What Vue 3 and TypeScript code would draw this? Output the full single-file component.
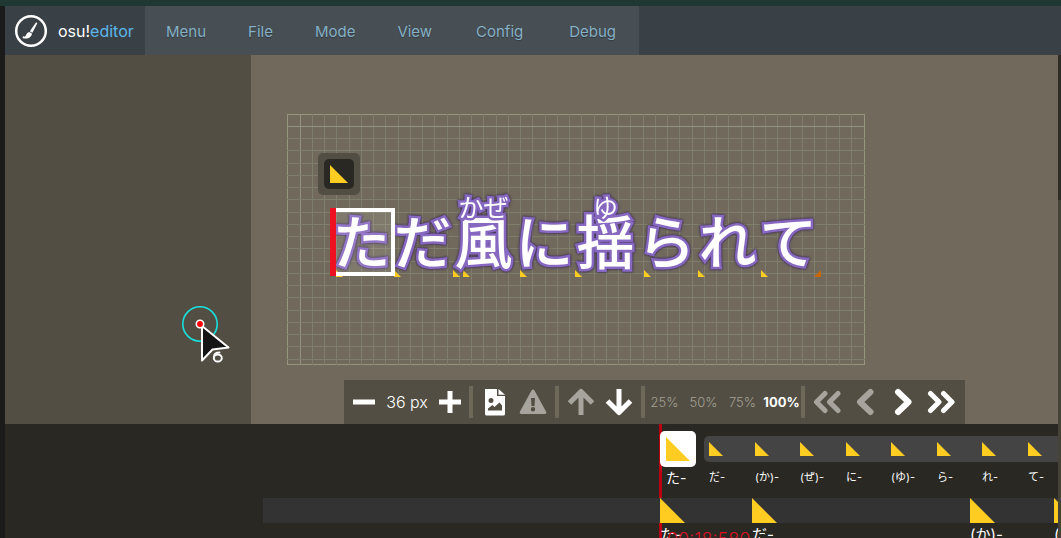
<script setup lang="ts">
interface Mark { left: number; label: string }

const menus: string[] = ['Menu', 'File', 'Mode', 'View', 'Config', 'Debug']

const cell = 12.25
const columns: number[] = Array.from({ length: 46 }, (_, i) => Math.ceil((i + 1) * cell))
const rows: number[] = Array.from({ length: 20 }, (_, i) => Math.floor((i + 1) * cell))

const glyphs: { text: string; ruby?: string }[] = [
  { text: 'た' }, { text: 'だ' }, { text: '風', ruby: 'かぜ' }, { text: 'に' },
  { text: '揺', ruby: 'ゆ' }, { text: 'ら' }, { text: 'れ' }, { text: 'て' },
]
const ticks: number[] = [49, 107, 166, 176, 233, 288, 357, 411, 474]

const zooms: string[] = ['25%', '50%', '75%', '100%']

const upcoming: Mark[] = [
  { left: 709, label: 'だ-' }, { left: 755, label: '(か)-' }, { left: 800, label: '(ぜ)-' },
  { left: 846, label: 'に-' }, { left: 891, label: '(ゆ)-' }, { left: 937, label: 'ら-' },
  { left: 982, label: 'れ-' }, { left: 1028, label: 'て-' },
]
const track: Mark[] = [
  { left: 660, label: 'た-' }, { left: 752, label: 'だ-' },
  { left: 970, label: '(か)-' }, { left: 1054, label: '(ぜ)-' },
]
const at = (left: number) => ({ left: `${left - 5}px` })
</script>

<template>
  <div class="frame">
    <header class="topbar">
      <a class="brand" href="#">
        <svg width="34" height="34" viewBox="0 0 34 34" aria-hidden="true">
          <circle cx="17" cy="17" r="14.8" fill="none" stroke="#fff" stroke-width="2.5" />
          <path d="M22 8.600Q23 8 23.300 9.200L18.400 18.800L15.800 17.300Z" fill="#fff" />
          <path d="M15.300 17.900L18 19.500C17.600 23 14.500 25.700 8.700 24.200Q8.500 23 9.100 22.300Q11.300 23.600 12 21Q12.800 18.300 15.300 17.900Z" fill="#fff" />
        </svg>
        <span class="name">osu!<b>editor</b></span>
      </a>
      <nav class="menu">
        <button v-for="m in menus" :key="m" type="button">{{ m }}</button>
      </nav>
    </header>

    <div class="body">
      <div class="content">
        <div class="work">
          <aside class="side">
            <svg class="pointer" width="50" height="60" viewBox="0 0 50 60" aria-hidden="true">
              <circle cx="19" cy="20" r="17.200" fill="none" stroke="#18e0dc" stroke-width="1.600" />
              <path d="M21 22L47.500 43.500L31.500 45.500L21 56.500Z" fill="#151515" stroke="#fff" stroke-width="2" stroke-linejoin="round" />
              <circle cx="19" cy="20" r="3.700" fill="#f00" stroke="#fff" stroke-width="1.600" />
              <path d="M33 53Q32.500 48.500 38.500 48.500" fill="none" stroke="#fff" stroke-width="1.800" stroke-linecap="round" />
              <ellipse cx="36.800" cy="54" rx="4" ry="3.500" fill="none" stroke="#fff" stroke-width="1.900" />
            </svg>
          </aside>

          <main class="stage">
            <div class="sheet">
              <svg class="grid" width="578" height="251" viewBox="0 0 578 251" aria-hidden="true">
                <rect v-for="(x, i) in columns" :key="'c' + x" :x="x" y="0" width="1" height="251" :class="{ strong: i === 0 }" />
                <rect v-for="(y, i) in rows" :key="'r' + y" x="0" :y="y" width="578" height="1" :class="{ strong: i === 0 }" />
              </svg>
              <button class="node" type="button" aria-label="Timing node">
                <span><i class="tri"></i></span>
              </button>
              <i v-for="t in ticks" :key="t" class="tick tri" :style="{ left: `${t}px` }"></i>
              <i class="tick end"></i>
              <div class="lyric">
                <span v-for="g in glyphs" :key="g.text" class="glyph">{{ g.text }}<small v-if="g.ruby">{{ g.ruby }}</small></span>
              </div>
              <div class="selection"></div>
            </div>

            <div class="tools">
              <button class="tool" type="button" aria-label="Smaller">
                <svg width="28" height="28" viewBox="0 0 28 28"><path d="M3 14H25" class="bar" /></svg>
              </button>
              <span class="size">36 px</span>
              <button class="tool" type="button" aria-label="Larger">
                <svg width="28" height="28" viewBox="0 0 28 28"><path d="M3 14H25M14 3V25" class="bar" /></svg>
              </button>
              <i class="sep"></i>
              <div class="group">
                <button class="tool" type="button" aria-label="Image">
                  <svg width="28" height="28" viewBox="0 0 28 28">
                    <path fill="#fff" fill-rule="evenodd" d="M4 1H16V8H24V26Q24 27.500 22.500 27.500H5.500Q4 27.500 4 26ZM10 10A2.500 2.500 0 1 0 10 15A2.500 2.500 0 1 0 10 10ZM7 22.500H21V17.500L18.500 14.500L13.500 19L11.500 17L7 20.500Z" />
                    <path fill="#fff" d="M17.500 1L24 6.700H17.500Z" />
                  </svg>
                </button>
                <button class="tool dim" type="button" aria-label="Warnings">
                  <svg width="28" height="28" viewBox="0 0 28 28">
                    <path fill="currentColor" fill-rule="evenodd" d="M12.500 2.500Q14 .500 15.500 2.500L27 23.500Q28 26 25.500 26H2.500Q0 26 1 23.500ZM12 10L12.500 18H15.500L16 10ZM14 19A2.200 2.200 0 1 0 14 23.400A2.200 2.200 0 1 0 14 19Z" />
                  </svg>
                </button>
              </div>
              <i class="sep"></i>
              <div class="group">
                <button class="tool dim" type="button" aria-label="Move up">
                  <svg width="28" height="28" viewBox="0 0 28 28"><path d="M14 27V4M2.500 15L14 3.500L25.500 15" class="arrow" /></svg>
                </button>
                <button class="tool" type="button" aria-label="Move down">
                  <svg width="28" height="28" viewBox="0 0 28 28"><path d="M14 1V24M2.500 13L14 24.500L25.500 13" class="arrow" /></svg>
                </button>
              </div>
              <i class="sep"></i>
              <div class="zooms">
                <button v-for="z in zooms" :key="z" type="button" :class="{ on: z === '100%' }">{{ z }}</button>
              </div>
              <i class="sep"></i>
              <div class="group">
                <button class="tool dim" type="button" aria-label="First">
                  <svg width="28" height="28" viewBox="0 0 28 28"><path d="M12 5.500L3.500 14L12 22.500M25 5.500L16.500 14L25 22.500" class="chev" /></svg>
                </button>
                <button class="tool dim" type="button" aria-label="Previous">
                  <svg width="28" height="28" viewBox="0 0 28 28"><path d="M19.500 4L9 14L19.500 24" class="chev wide" /></svg>
                </button>
                <button class="tool" type="button" aria-label="Next">
                  <svg width="28" height="28" viewBox="0 0 28 28"><path d="M9 4L19.500 14L9 24" class="chev wide" /></svg>
                </button>
                <button class="tool" type="button" aria-label="Last">
                  <svg width="28" height="28" viewBox="0 0 28 28"><path d="M3.500 5.500L12 14L3.500 22.500M16.500 5.500L25 14L16.500 22.500" class="chev" /></svg>
                </button>
              </div>
            </div>
          </main>
        </div>

        <section class="timeline">
          <i class="playhead"></i>
          <div class="strip"></div>
          <div class="lane"></div>
          <div class="current"><i class="tri"></i></div>
          <span class="mark now">た-</span>
          <div v-for="m in upcoming" :key="m.label" class="mark" :style="at(m.left)">
            <i class="tri"></i><span>{{ m.label }}</span>
          </div>
          <div v-for="m in track" :key="m.left" class="mark big" :style="at(m.left)">
            <i class="tri"></i><span>{{ m.label }}</span>
          </div>
          <span class="time">00:18:580</span>
        </section>
      </div>
      <div class="scroll"><i></i></div>
    </div>
  </div>
</template>

<style>
body { margin: 0; overflow: hidden; background: #1b1b1b; }
</style>

<style scoped>
.frame {
  height: 100vh;
  box-sizing: border-box;
  display: flex;
  flex-direction: column;
  padding: 6px 0 0 5px;
  background: linear-gradient(#1f3833 6px, #1b1b1b 6px);
  font-family: Inter, "Noto Sans CJK JP", sans-serif;
}
button { border: 0; padding: 0; margin: 0; background: none; font: inherit; color: inherit; }
.tri { display: block; background: #ffcc22; clip-path: polygon(0 0, 100% 100%, 0 100%); }

.topbar { display: flex; flex: none; height: 49px; background: #394046; }
.brand { width: 140px; box-sizing: border-box; padding-left: 9px; display: flex; align-items: center; gap: 10px; color: #fff; text-decoration: none; font-size: 16px; }
.brand b { font-weight: 400; color: #5cb8ec; }
.menu { display: flex; background: #474f55; }
.menu button { padding: 2px 21px 0; font-size: 15px; color: #86b0c5; text-shadow: 0 1px 1px #0005; }
.menu button:nth-last-child(-n + 2) { min-width: 93px; }

.body { flex: 1; min-height: 0; display: flex; }
.content { position: relative; flex: 1; min-width: 0; display: flex; flex-direction: column; overflow: hidden; }
.scroll { width: 3px; background: #454238; }
.scroll i { display: block; height: 30%; background: #2f2c26; }

.work { display: flex; flex: none; height: 369px; }
.side { position: relative; width: 246px; flex: none; background: #524e43; }
.pointer { position: absolute; left: 176px; top: 249px; }
.stage { flex: 1; display: flex; flex-direction: column; justify-content: space-between; align-items: center; background: #716a5c; }
.sheet { position: relative; align-self: flex-start; box-sizing: border-box; width: 578px; height: 251px; margin: 59px 0 0 36px; outline: 1px solid #96967f; outline-offset: -1px; }
.grid { position: absolute; left: 0; top: 0; }
.grid rect { fill: #7f7e6d; }
.grid .strong { fill: #929280; }
.node { position: absolute; left: 31px; top: 39px; padding: 6px; border-radius: 5px; background: #524e43; }
.node span { width: 30px; height: 30px; border-radius: 5px; display: grid; place-items: center; background: #292823; }
.node .tri { width: 18px; height: 18px; }
.selection { position: absolute; left: 43px; top: 94px; width: 65px; height: 68px; box-sizing: border-box; border: 4px solid #fff; border-left: 6px solid #fff; background: #ffffff1c; }
.selection::before { content: ""; position: absolute; left: -6px; top: -4px; bottom: -4px; width: 6px; background: #ee1122; }
.tick { position: absolute; top: 156px; width: 7px; height: 7px; }
.end { left: 527px; background: #cc6600; clip-path: polygon(100% 0, 100% 100%, 0 100%); }
.lyric { position: absolute; left: 44px; top: 95px; display: flex; font-family: "Noto Sans CJK JP", sans-serif; font-size: 58px; font-weight: 500; line-height: 61px; color: #fff; -webkit-text-stroke: 5px #8768c0; paint-order: stroke fill; filter: drop-shadow(0 0 1px #3a2a55) drop-shadow(0 0 1px #3a2a5588); }
.glyph { position: relative; width: 61px; text-align: center; }
.glyph small { position: absolute; left: 0; right: 0; top: -15px; font-size: 25px; line-height: 25px; font-weight: 400; white-space: nowrap; }

.tools { display: flex; align-items: center; height: 44px; padding: 0 2px 0 1px; background: #524e43; color: #fff; }
.tool { width: 38px; height: 38px; display: grid; place-items: center; }
.dim { color: #a6a49d; }
.size { width: 48px; text-align: center; font-size: 16px; font-weight: 300; }
.sep { width: 4px; height: 32px; background: #6d6858; }
.group { display: flex; padding: 0 3px; }
.bar { stroke: #fff; stroke-width: 5; fill: none; }
.arrow { stroke: currentColor; stroke-width: 5; stroke-linejoin: round; fill: none; }
.chev { stroke: currentColor; stroke-width: 5; stroke-linecap: round; stroke-linejoin: round; fill: none; }
.wide { stroke-width: 6; }
.zooms { display: flex; }
.zooms button { width: 39px; font-size: 13px; font-weight: 300; color: #a3a094; }
.zooms .on { font-weight: 700; color: #fff; }

.timeline { position: relative; flex: 1; background: #292823; color: #fff; }
.playhead { position: absolute; left: 654px; top: 0; bottom: 0; width: 3px; background: #bb0011; }
.strip { position: absolute; left: 699px; right: 0; top: 12px; height: 26px; border-radius: 5px 0 0 5px; background: #444; }
.lane { position: absolute; left: 258px; right: 0; top: 74px; height: 25px; background: #333; }
.current { position: absolute; left: 655px; top: 7px; width: 36px; height: 36px; border-radius: 5px; background: #fff; display: grid; place-items: center; }
.current .tri { width: 24px; height: 24px; }
.mark { position: absolute; top: 18px; font-size: 11px; line-height: 16px; white-space: nowrap; }
.mark .tri { width: 14px; height: 14px; margin-bottom: 13px; }
.mark.now { left: 661px; top: 46px; font-size: 14px; }
.mark.big { top: 74px; font-size: 15px; line-height: 24px; }
.big .tri { width: 25px; height: 25px; margin-bottom: 0; }
.time { position: absolute; left: 662px; top: 104px; font-size: 18px; font-weight: 300; line-height: 24px; color: #dd1122; }
</style>
